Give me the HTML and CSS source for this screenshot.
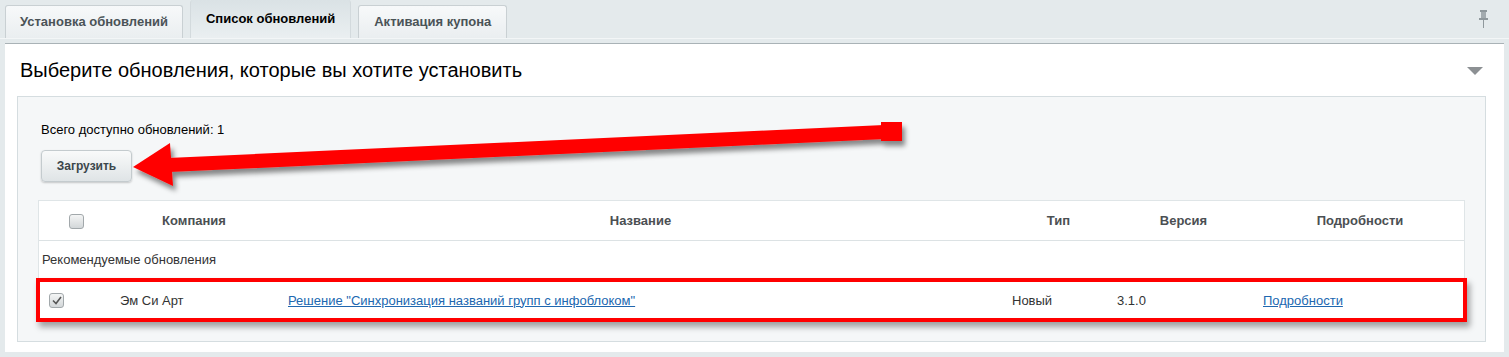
FILE: index.html
```html
<!DOCTYPE html>
<html>
<head>
    <meta charset="UTF-8">
    <title>Список обновлений</title>
    <link rel="stylesheet" href="styles.css">
</head>
<body>
<div class="page">
    <div class="tabs">
        <div class="tab">Установка обновлений</div>
        <div class="tab active">Список обновлений</div>
        <div class="tab">Активация купона</div>
        <div class="pin">
            <svg width="11" height="18" viewBox="0 0 11 18">
                <rect x="2" y="0" width="7" height="2" fill="#8f989c"/>
                <rect x="3" y="2" width="5" height="6" fill="#a3abaf"/>
                <rect x="1" y="8" width="9" height="2" fill="#8f989c"/>
                <rect x="5" y="10" width="1" height="8" fill="#8f989c"/>
            </svg>
        </div>
    </div>

    <div class="panel">
        <div class="panel-head">
            <h1>Выберите обновления, которые вы хотите установить</h1>
            <span class="collapse"></span>
        </div>

        <div class="box">
            <div class="count">Всего доступно обновлений: 1</div>
            <button class="btn">Загрузить</button>

            <div class="table">
                <div class="row head">
                    <div class="cell center"><span class="check"></span></div>
                    <div class="cell center">Компания</div>
                    <div class="cell center">Название</div>
                    <div class="cell center">Тип</div>
                    <div class="cell center">Версия</div>
                    <div class="cell center">Подробности</div>
                </div>
                <div class="group">Рекомендуемые обновления</div>
                <div class="row item">
                    <div class="cell first">
                        <span class="check on">
                            <svg width="10" height="9" viewBox="0 0 10 9"><path d="M1 4.5 L4 7.5 L9 1" fill="none" stroke="#555" stroke-width="1.6"/></svg>
                        </span>
                    </div>
                    <div class="cell">Эм Си Арт</div>
                    <div class="cell"><a href="#">Решение "Синхронизация названий групп с инфоблоком"</a></div>
                    <div class="cell">Новый</div>
                    <div class="cell">3.1.0</div>
                    <div class="cell"><a href="#">Подробности</a></div>
                </div>
            </div>
        </div>
    </div>

    <!-- стрелка поверх страницы -->
    <svg class="arrow" width="1509" height="357" viewBox="0 0 1509 357">
        <defs>
            <filter id="sh" x="-10%" y="-50%" width="120%" height="200%">
                <feDropShadow dx="3" dy="5" stdDeviation="2.5" flood-color="#000" flood-opacity="0.45"/>
            </filter>
        </defs>
        <g filter="url(#sh)" fill="#ff0000">
            <polygon points="168,158 884,125 885,139 169,172"/>
            <rect x="881" y="122" width="21" height="19"/>
            <polygon points="133,167 170,143 173,186"/>
        </g>
    </svg>
</div>
</body>
</html>
```

FILE: styles.css
```css
body {
    margin: 0;
    background: #e4eaec;
    font-family: 'Liberation Sans', Arial, sans-serif;
    font-size: 13px;
    color: #333;
}
.page {
    position: relative;
    width: 1509px;
    height: 357px;
    overflow: hidden;
}
.tabs {
    display: flex;
    align-items: flex-end;
    gap: 7px;
    height: 38px;
    padding: 0 5px;
    border-bottom: 1px solid #f3f6f7;
}
.tab {
    height: 33px;
    line-height: 32px;
    padding: 0 14px;
    font-weight: bold;
    color: #4a5357;
    background: linear-gradient(#f7f9fa, #eaeef0);
    border: 1px solid #c9d0d3;
    border-bottom: none;
    border-radius: 3px 3px 0 0;
    box-sizing: border-box;
}
.tab:nth-child(3) {
    padding: 0 15px;
}
.tab.active {
    height: 38px;
    line-height: 38px;
    color: #000;
    background: linear-gradient(#dae2e5, #eaeff1);
    border-color: #d3dadd;
    border-top: none;
    padding: 0 15px;
}
.pin {
    margin-left: auto;
    align-self: flex-start;
    padding: 10px 15px 0 0;
}
.panel {
    margin: 4px 5px 0;
    background: #fff;
    border-top: 1px solid #a9b2b6;
    height: 308px;
    display: flex;
    flex-direction: column;
}
.panel-head {
    display: flex;
    align-items: center;
    justify-content: space-between;
    height: 52px;
    padding: 0 21px 0 15px;
}
h1 {
    margin: 0;
    font-size: 20px;
    font-weight: normal;
    color: #000;
}
.collapse {
    width: 0;
    height: 0;
    border-left: 8px solid transparent;
    border-right: 8px solid transparent;
    border-top: 8px solid #8c9093;
    margin-top: 2px;
}
.box {
    margin: 0 18px 0 12px;
    height: 244px;
    background: #f5f7f8;
    border: 1px solid #d5dde0;
    padding: 0 20px;
}
.count {
    padding: 25px 0 0 3px;
    color: #000;
    height: 28px;
}
.btn {
    display: block;
    margin-left: 3px;
    width: 91px;
    height: 32px;
    font-family: 'Liberation Sans', Arial, sans-serif;
    font-size: 12px;
    font-weight: bold;
    color: #3c474c;
    background: linear-gradient(#f9fafa, #dfe4e6);
    border: 1px solid #c4cbce;
    border-radius: 4px;
    box-shadow: 0 1px 2px rgba(0,0,0,0.2);
}
.table {
    margin-top: 18px;
    background: #fff;
    border: 1px solid #dfe5e7;
    border-bottom: none;
}
.row {
    display: grid;
    grid-template-columns: 74px 162px 731px 105px 145px 1fr;
    align-items: center;
}
.head {
    height: 39px;
    border-bottom: 1px solid #dce2e4;
    font-weight: bold;
    color: #4b4f52;
}
.cell {
    padding: 0 8px;
    white-space: nowrap;
}
.cell.center {
    text-align: center;
}
.cell.first {
    padding-left: 9px;
}
.group {
    height: 37px;
    line-height: 38px;
    padding-left: 3px;
    color: #333;
}
.item {
    grid-template-columns: 72px 168px 724px 105px 146px 1fr;
    height: 36px;
    margin: 0 -3px;
    border: 4px solid #ff0000;
    background: #fff;
    box-shadow: 3px 5px 6px rgba(0,0,0,0.35);
    color: #333;
}
a {
    color: #2067b0;
}
.check {
    display: inline-block;
    width: 13px;
    height: 13px;
    border: 1px solid #a2a8ab;
    border-radius: 3px;
    background: linear-gradient(#f4f5f5, #d3d7d9);
    vertical-align: middle;
    position: relative;
}
.check svg {
    position: absolute;
    left: 2px;
    top: 2px;
}
.arrow {
    position: absolute;
    left: 0;
    top: 0;
    pointer-events: none;
}
```
